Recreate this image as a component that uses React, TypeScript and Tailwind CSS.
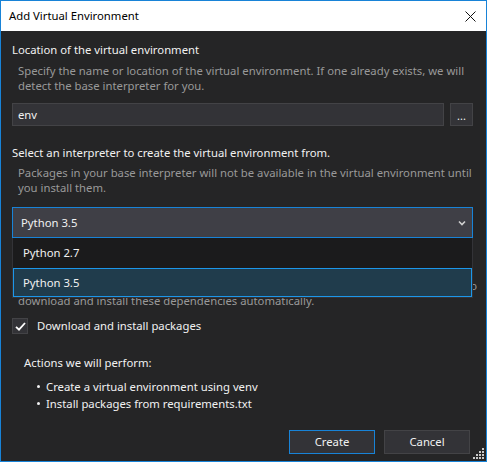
import React from "react";

function Chevron() {
  return (
    <svg width="8" height="6" viewBox="0 0 8 6" className="block">
      <path d="M1 1.5 L4 4.5 L7 1.5" fill="none" stroke="#d0d0d0" strokeWidth="1.6" />
    </svg>
  );
}

function Grip() {
  const dots: [number, number][] = [];
  for (let r = 0; r < 4; r++) {
    for (let c = 3 - r; c < 4; c++) dots.push([c * 3, r * 3]);
  }
  return (
    <svg width="11" height="11" viewBox="0 0 11 11" className="block">
      {dots.map(([x, y], i) => (
        <rect key={i} x={x} y={y} width="2" height="2" fill="#c8c8c8" />
      ))}
    </svg>
  );
}

export default function App() {
  return (
    <div className="w-[487px] h-[462px] border border-[#1883d7] bg-[#252526] flex flex-col relative font-['Noto_Sans',sans-serif] text-[11.3px] text-[#f1f1f1] overflow-hidden whitespace-nowrap">
      {/* Title bar */}
      <div className="h-[30px] bg-white flex items-center justify-between pl-[8px] pr-[10px] shrink-0">
        <span className="text-black leading-[16px]">Add Virtual Environment</span>
        <svg width="11" height="11" viewBox="0 0 11 11" className="block">
          <path d="M0.5 0.5 L10.5 10.5 M10.5 0.5 L0.5 10.5" stroke="#111" strokeWidth="1" />
        </svg>
      </div>

      {/* Body */}
      <div className="flex-1 flex flex-col pl-[11px] pr-[13px] pt-[11px] pb-[7px]">
        <div className="leading-[16px]">Location of the virtual environment</div>
        <div className="mt-[5px] pl-[6px] leading-[15px] text-[#999999]">
          <div>Specify the name or location of the virtual environment. If one already exists, we will</div>
          <div>detect the base interpreter for you.</div>
        </div>
        <div className="mt-[10px] flex gap-[6px] h-[23px]">
          <div className="flex-1 bg-[#333337] border border-[#434346] flex items-center pl-[5px] leading-[16px]">
            env
          </div>
          <div className="w-[23px] bg-[#333337] border border-[#434346] flex items-end justify-center pb-[4px] leading-[10px] text-[11px]">
            ...
          </div>
        </div>

        <div className="mt-[19px] leading-[16px]">Select an interpreter to create the virtual environment from.</div>
        <div className="mt-[4px] pl-[6px] leading-[15px] text-[#999999]">
          <div>Packages in your base interpreter will not be available in the virtual environment until</div>
          <div>you install them.</div>
        </div>

        <div className="relative mt-[12px]">
          <div className="h-[31px] bg-[#3f3f46] border border-[#1883d7] flex items-center justify-between pl-[8px] pr-[6px] leading-[16px]">
            <span>Python 3.5</span>
            <Chevron />
          </div>
          {/* Dropdown list overlay */}
          <div className="absolute top-full left-0 right-0 z-10 h-[60px] bg-[#1b1b1c] border-x border-b border-[#333337] flex flex-col">
            <div className="h-[30px] flex items-center pl-[10px] leading-[16px]">Python 2.7</div>
            <div className="h-[29px] bg-[#203c4c] border border-[#1c97ea] flex items-center pl-[9px] leading-[16px]">
              Python 3.5
            </div>
          </div>
        </div>

        {/* Content partially hidden by dropdown */}
        <div className="mt-[40px] pl-[6px] leading-[15px] text-[#999999]">
          <div className="text-right mr-[-4px] overflow-hidden">
            We found a requirements.txt file in your project. Do you want us to
          </div>
          <div>download and install these dependencies automatically.</div>
        </div>

        <div className="mt-[10px] flex items-center gap-[9px] h-[16px]">
          <div className="w-[16px] h-[16px] bg-[#333337] border border-[#434346] flex items-center justify-center">
            <svg width="11" height="9" viewBox="0 0 11 9" className="block">
              <path d="M1 4.8 L4 7.6 L10 1" fill="none" stroke="#ffffff" strokeWidth="1.8" />
            </svg>
          </div>
          <span className="leading-[16px]">Download and install packages</span>
        </div>

        <div className="mt-[21px] pl-[12px] leading-[16px]">Actions we will perform:</div>
        <ul className="mt-[7px] pl-[25px]">
          <li className="flex items-center gap-[6px] leading-[17px]">
            <span className="w-[3px] h-[3px] bg-[#f1f1f1] rounded-full" />
            <span>Create a virtual environment using venv</span>
          </li>
          <li className="flex items-center gap-[6px] leading-[17px]">
            <span className="w-[3px] h-[3px] bg-[#f1f1f1] rounded-full" />
            <span>Install packages from requirements.txt</span>
          </li>
        </ul>

        <div className="mt-auto flex justify-end gap-[9px] mr-[3px]">
          <button className="w-[86px] h-[24px] bg-[#333337] border border-[#1883d7] text-[#f1f1f1] leading-[16px]">
            Create
          </button>
          <button className="w-[86px] h-[24px] bg-[#333337] border border-[#434346] text-[#f1f1f1] leading-[16px]">
            Cancel
          </button>
        </div>
      </div>

      <div className="absolute right-[2px] bottom-[2px]">
        <Grip />
      </div>
    </div>
  );
}
